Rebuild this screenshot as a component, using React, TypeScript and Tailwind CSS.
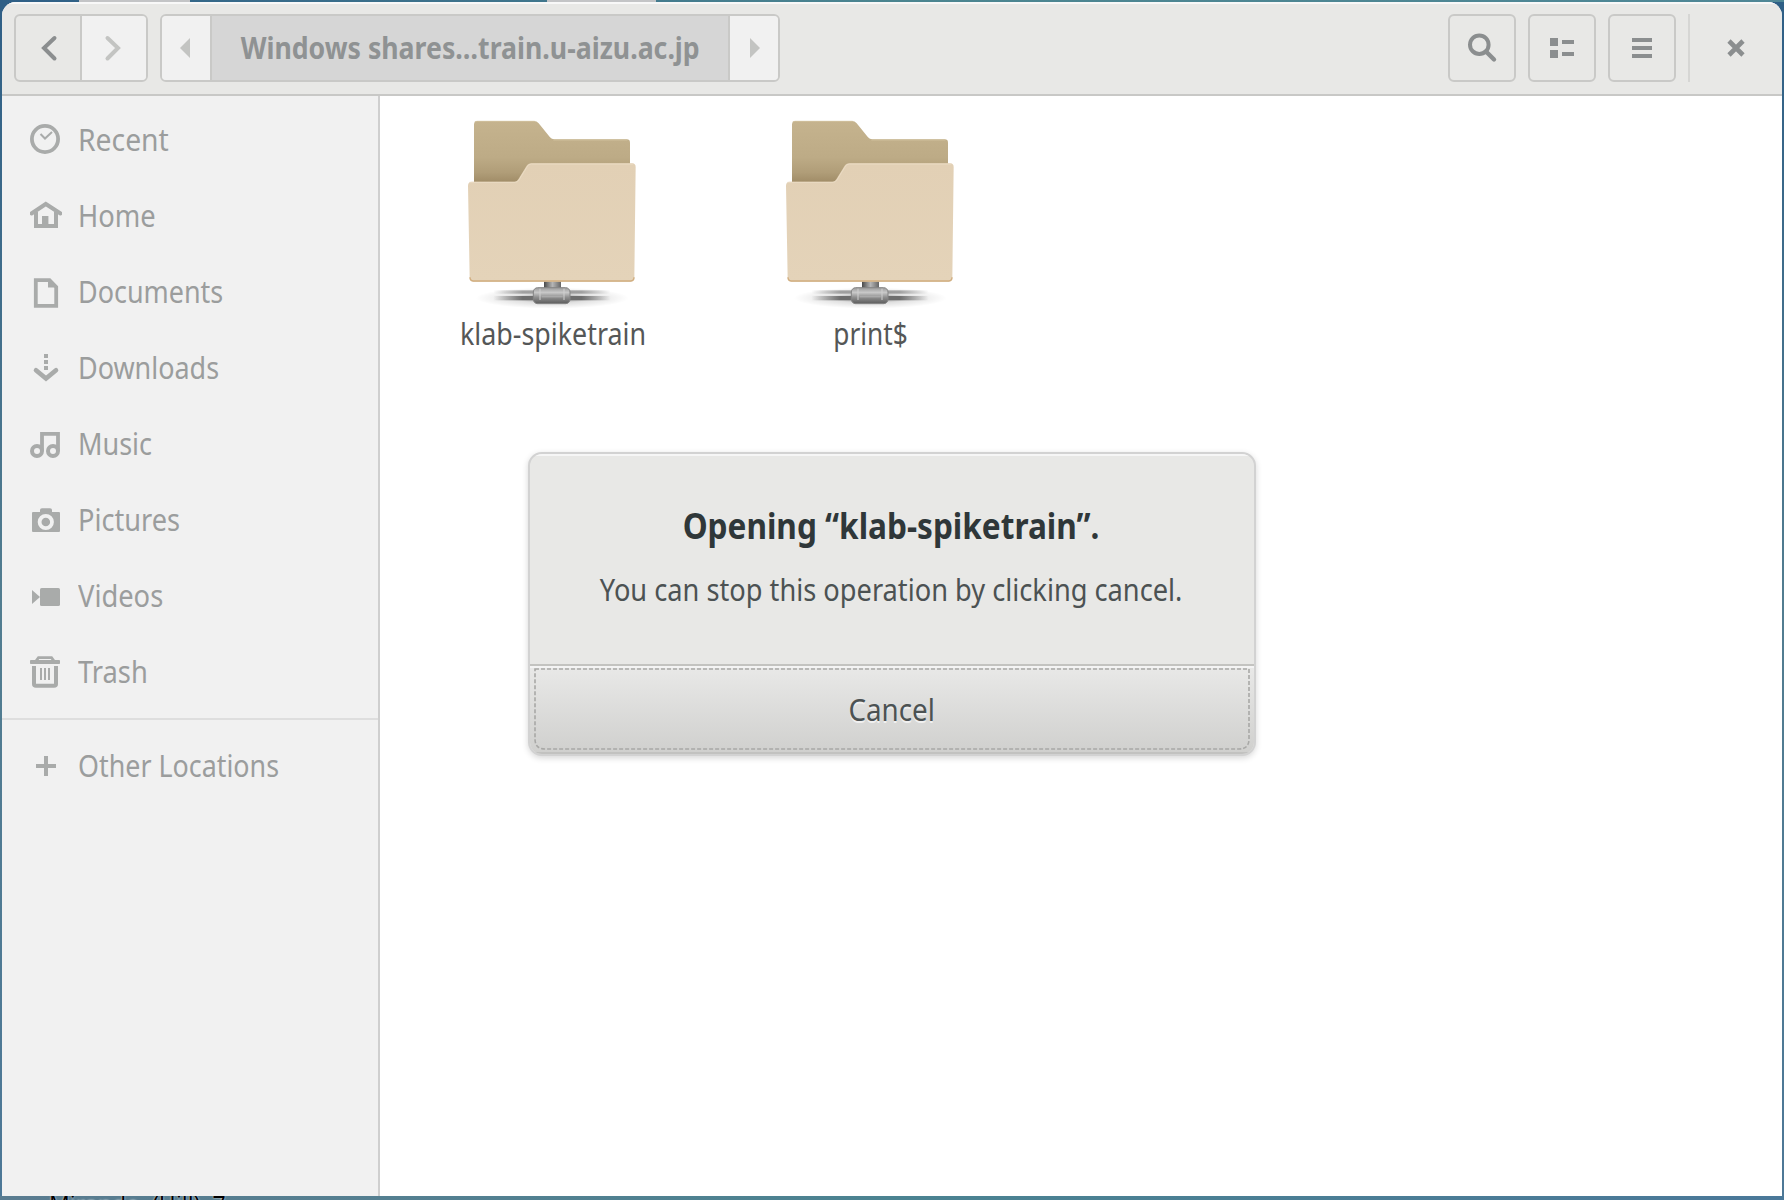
import React from "react";

const ICON = "#a9abaa";

function RecentIcon() {
  return (
    <g fill="none" stroke={ICON}>
      <circle cx="15" cy="15" r="13.1" strokeWidth="3.8" />
      <path d="M10.5 10 L15 14.5 L22 8" strokeWidth="2" />
    </g>
  );
}

function HomeIcon() {
  return (
    <g>
      <path d="M1.5 13.5 L15.8 4 L30.5 13.5" fill="none" stroke={ICON} strokeWidth="4" strokeLinecap="round" />
      <path d="M6 12 V26 H26 V12" fill="none" stroke={ICON} strokeWidth="4" />
      <rect x="12" y="16" width="6.4" height="10" fill={ICON} />
    </g>
  );
}

function DocumentsIcon() {
  return (
    <g>
      <path d="M5.8 4.2 H19.5 L26.2 11 V29.8 H5.8 Z" fill="none" stroke={ICON} strokeWidth="3.8" />
      <path d="M18 4 V11.6 H26 Z" fill={ICON} />
    </g>
  );
}

function DownloadsIcon() {
  return (
    <g>
      <path d="M14 2h4v4h-4zM14 8h4v4h-4zM14 14h4v4h-4z" fill={ICON} />
      <path d="M6 18.2 L16 26.6 L26 18.2" fill="none" stroke={ICON} strokeWidth="4.6" strokeLinecap="round" />
    </g>
  );
}

function MusicIcon() {
  return (
    <g fill="none" stroke={ICON}>
      <circle cx="7" cy="23" r="5" strokeWidth="4" />
      <circle cx="23" cy="23" r="5" strokeWidth="4" />
      <path d="M12 23 V5.8 H28 V23" strokeWidth="3.8" />
    </g>
  );
}

function PicturesIcon() {
  return (
    <g>
      <path
        d="M10 8 V6 Q10 4.2 12 4.2 H20 Q22 4.2 22 6 V8 H29 Q30 8 30 9 V27 Q30 28 29 28 H3 Q2 28 2 27 V9 Q2 8 3 8 Z"
        fill={ICON}
      />
      <circle cx="15.8" cy="18" r="6.2" fill="none" stroke="#f1f1f1" strokeWidth="3.8" />
    </g>
  );
}

function VideosIcon() {
  return (
    <g fill={ICON}>
      <rect x="10" y="8" width="20" height="18" rx="1.6" />
      <path d="M2 10 L10 17 L2 24 Z" />
    </g>
  );
}

function TrashIcon() {
  return (
    <g>
      <rect x="0" y="4" width="30" height="4" rx="0.8" fill={ICON} />
      <path d="M6 5 L8.5 1.6 H21.5 L24 5" fill="none" stroke={ICON} strokeWidth="2.8" />
      <path d="M4 10 V28 Q4 29.8 6 29.8 H24 Q26 29.8 26 28 V10" fill="none" stroke={ICON} strokeWidth="4" />
      <path d="M11 12 V24 M15 12 V24 M19 12 V24" stroke={ICON} strokeWidth="2" />
    </g>
  );
}

function PlusIcon() {
  return <path d="M16 6 V26 M6 16 H26" stroke={ICON} strokeWidth="4" />;
}

const places = [
  { label: "Recent", icon: RecentIcon, fit: "scale-x-[0.943]" },
  { label: "Home", icon: HomeIcon, fit: "scale-x-[0.91]" },
  { label: "Documents", icon: DocumentsIcon, fit: "scale-x-[0.898]" },
  { label: "Downloads", icon: DownloadsIcon, fit: "scale-x-[0.898]" },
  { label: "Music", icon: MusicIcon, fit: "scale-x-[0.9]" },
  { label: "Pictures", icon: PicturesIcon, fit: "scale-x-[0.905]" },
  { label: "Videos", icon: VideosIcon, fit: "scale-x-[0.91]" },
  { label: "Trash", icon: TrashIcon, fit: "scale-x-[0.91]" },
];

function Place({ label, icon: Icon, fit }: { label: string; icon: () => React.ReactElement; fit: string }) {
  return (
    <li className="flex h-[76px] items-center pl-7">
      <svg width="32" height="32" viewBox="0 0 32 32" className="shrink-0">
        <Icon />
      </svg>
      <span className={`mb-[1px] ml-4 origin-left whitespace-nowrap ${fit}`}>{label}</span>
    </li>
  );
}

function ShareFolder({ id, label, fit }: { id: string; label: string; fit: string }) {
  return (
    <div className="flex w-[318px] flex-col items-center">
      <svg width="240" height="210" viewBox="-21 0 720 630">
        <defs>
          <linearGradient id={`${id}-back`} gradientUnits="userSpaceOnUse" x1="0" y1="63" x2="0" y2="245">
            <stop offset="0" stopColor="#c5b38e" />
            <stop offset="0.6" stopColor="#bdab86" />
            <stop offset="0.85" stopColor="#b09d78" />
            <stop offset="1" stopColor="#a18d68" />
          </linearGradient>
          <linearGradient id={`${id}-front`} x1="0" y1="0" x2="0" y2="1">
            <stop offset="0" stopColor="#e2d0b5" />
            <stop offset="1" stopColor="#e4d3b9" />
          </linearGradient>
          <linearGradient id={`${id}-cable`} x1="0" y1="0" x2="1" y2="0">
            <stop offset="0" stopColor="#6e6e6e" stopOpacity="0" />
            <stop offset="0.25" stopColor="#6e6e6e" />
            <stop offset="0.75" stopColor="#6e6e6e" />
            <stop offset="1" stopColor="#6e6e6e" stopOpacity="0" />
          </linearGradient>
          <linearGradient id={`${id}-plug`} x1="0" y1="0" x2="0" y2="1">
            <stop offset="0" stopColor="#9a9a9a" />
            <stop offset="0.3" stopColor="#c8c8c8" />
            <stop offset="0.6" stopColor="#8f8f8f" />
            <stop offset="1" stopColor="#5c5c5c" />
          </linearGradient>
          <linearGradient id={`${id}-stem`} x1="0" y1="0" x2="1" y2="0">
            <stop offset="0" stopColor="#4a4a4a" />
            <stop offset="0.5" stopColor="#b5b5b5" />
            <stop offset="1" stopColor="#666" />
          </linearGradient>
          <radialGradient id={`${id}-shade`}>
            <stop offset="0" stopColor="#000" stopOpacity="0.45" />
            <stop offset="0.5" stopColor="#000" stopOpacity="0.12" />
            <stop offset="1" stopColor="#000" stopOpacity="0" />
          </radialGradient>
        </defs>
        <path
          d="M102 74 Q102 63 113 63 H282 Q290 63 296 70 L330 112 Q335 118 343 118 H560 Q570 118 570 128 V250 H102 Z"
          fill={`url(#${id}-back)`}
        />
        <path d="M104 66 Q106 64 113 64 H284 M340 120 H562" stroke="#d0c09c" strokeWidth="3" fill="none" />
        <ellipse cx="337" cy="594" rx="230" ry="32" fill={`url(#${id}-shade)`} />
        <rect x="160" y="571" width="352" height="10" fill={`url(#${id}-cable)`} opacity="0.6" />
        <rect x="160" y="588" width="352" height="13" fill={`url(#${id}-cable)`} />
        <rect x="312" y="540" width="51" height="28" fill={`url(#${id}-stem)`} />
        <rect x="280" y="563" width="110" height="48" rx="13" fill={`url(#${id}-plug)`} stroke="#858585" strokeWidth="3" />
        <path d="M300 566 V600 M372 566 V600" stroke="#d0d0d0" strokeWidth="3" />
        <path d="M305 590 H368" stroke="#aaa" strokeWidth="4" />
        <path
          d="M84 257 Q84 245 96 245 H224 Q231 245 235 238 L259 199 Q264 190 274 190 H576 Q587 190 587 201 L583 534 Q583 545 572 545 H100 Q89 545 89 534 Z"
          fill={`url(#${id}-front)`}
        />
        <path d="M89 247 H226 Q233 247 237 240 L261 201 Q265 192 274 192 H580" fill="none" stroke="#eadbc3" strokeWidth="3" />
        <path d="M90 532 Q90 543 100 543 H572 Q582 543 582 532" fill="none" stroke="#d1ae80" strokeWidth="4" />
      </svg>
      <span className={`mt-[2px] whitespace-nowrap leading-[44px] text-[#555757] ${fit}`}>{label}</span>
    </div>
  );
}

function HeaderButton({ children }: { children: React.ReactNode }) {
  return (
    <button className="flex size-[68px] items-center justify-center rounded-[6px] border-2 border-[#c9c9c7]">
      <svg width="64" height="64" viewBox="2 2 64 64">
        {children}
      </svg>
    </button>
  );
}

export default function App() {
  return (
    <div className="flex h-[1200px] w-[1784px] flex-col overflow-hidden bg-[#4b7590] font-['Noto_Sans',sans-serif] text-[30px] leading-none">
      <div className="flex h-[2px] shrink-0 bg-linear-to-r from-[#2f5f86] via-[#4b8590] to-[#4f8796]">
        <div className="ml-[79px] w-[111px] bg-[#c3c4c6]" />
        <div className="ml-[357px] w-[109px] bg-[#c3c4c6]" />
      </div>

      <div className="flex h-[1194px] bg-linear-to-b from-[#2f5f86] via-[#527d90] to-[#4d7897] px-[2px]">
        <div className="relative flex flex-1 flex-col overflow-hidden rounded-t-[14px] bg-white">
          <header className="flex h-[94px] shrink-0 items-start border-b-2 border-[#c8c8c6] bg-[#e8e8e6] pl-3 pt-3 shadow-[inset_0_2px_0_#f8f8f8]">
            <div className="flex h-[68px] w-[134px] overflow-hidden rounded-[6px] border-2 border-[#c9c9c7]">
              <button className="w-[66px] shrink-0 border-r-2 border-[#c9c9c7]">
                <svg width="64" height="64" viewBox="16 16 64 64">
                  <path d="M54.5 38 L44 48 L54.5 58.5" fill="none" stroke="#8b8e8f" strokeWidth="4" strokeLinecap="round" />
                </svg>
              </button>
              <button className="flex-1 bg-[#f1f1f1]">
                <svg width="64" height="64" viewBox="82 16 64 64">
                  <path d="M107.5 38 L118 48 L107.5 58.5" fill="none" stroke="#c3c4c2" strokeWidth="4" strokeLinecap="round" />
                </svg>
              </button>
            </div>

            <div className="ml-3 flex h-[68px] w-[620px] overflow-hidden rounded-[6px] border-2 border-[#c9c9c7]">
              <button className="w-[50px] shrink-0 border-r-2 border-[#c9c9c7] bg-[#f1f1f1]">
                <svg width="48" height="64" viewBox="162 16 48 64">
                  <path d="M190 38 V58 L180 48 Z" fill="#c3c4c2" />
                </svg>
              </button>
              <button className="flex min-w-0 flex-1 items-center justify-center bg-[#d6d6d6] text-[#8f9293]">
                <span className="scale-x-[0.889] whitespace-nowrap font-bold">Windows shares…train.u-aizu.ac.jp</span>
              </button>
              <button className="w-[50px] shrink-0 border-l-2 border-[#c9c9c7] bg-[#f1f1f1]">
                <svg width="48" height="64" viewBox="730 16 48 64">
                  <path d="M750 38 V58 L760 48 Z" fill="#c3c4c2" />
                </svg>
              </button>
            </div>

            <div className="ml-auto flex gap-3">
              <HeaderButton>
                <circle cx="31.3" cy="30.7" r="9.3" fill="none" stroke="#8b8e8f" strokeWidth="4" />
                <path d="M38 37.5 L46 45.5" stroke="#8b8e8f" strokeWidth="4.4" strokeLinecap="round" />
              </HeaderButton>
              <HeaderButton>
                <path d="M22 24h8v8h-8zM22 36h8v8h-8zM34 26h12v4h-12zM34 38h12v4h-12z" fill="#8b8e8f" />
              </HeaderButton>
              <HeaderButton>
                <path d="M24 24h20v4H24zM24 32h20v4H24zM24 40h20v4H24z" fill="#8b8e8f" />
              </HeaderButton>
            </div>
            <div className="ml-3 h-[68px] w-[2px] bg-[#d6d6d4]" />
            <button className="ml-3 mr-3 size-[68px]">
              <svg width="68" height="68" viewBox="0 0 68 68">
                <path d="M27 27 L41 41 M41 27 L27 41" stroke="#8b8e8f" strokeWidth="4.6" />
              </svg>
            </button>
          </header>

          <div className="flex flex-1">
            <aside className="w-[378px] border-r-2 border-[#cfcfcf] bg-[#f1f1f1] pt-[6px] text-[#9b9d9d]">
              <ul>
                {places.map((p) => (
                  <Place key={p.label} {...p} />
                ))}
              </ul>
              <div className="mt-[8px] h-[2px] bg-[#dedede]" />
              <ul className="mt-[8px]">
                <Place label="Other Locations" icon={PlusIcon} fit="scale-x-[0.895]" />
              </ul>
            </aside>
            <main className="flex flex-1 items-start pl-[14px] pt-[4px]">
              <ShareFolder id="share" label="klab-spiketrain" fit="scale-x-[0.895]" />
              <ShareFolder id="print" label="print$" fit="scale-x-[0.875]" />
            </main>
          </div>

          <div
            role="dialog"
            className="absolute left-[526px] top-[450px] flex h-[304px] w-[728px] flex-col overflow-hidden rounded-[14px] border-2 border-[#d2d2d2] bg-[#e8e8e6] text-[#4c5253] shadow-[0_2px_6px_rgba(0,0,0,0.16)]"
          >
            <div className="flex h-[212px] flex-col items-center border-b-2 border-[#c3c3c0] pr-[2px] shadow-[inset_0_2px_0_#f6f6f6]">
              <h1 className="mt-[50px] scale-x-[0.902] whitespace-nowrap text-[35px] font-bold leading-[44px] text-[#2f3739]">
                Opening “klab-spiketrain”.
              </h1>
              <p className="mt-5 scale-x-[0.907] whitespace-nowrap leading-[44px]">
                You can stop this operation by clicking cancel.
              </p>
            </div>
            <button className="relative flex flex-1 items-center justify-center border-b-2 border-[#c2c2c0] bg-linear-to-b from-[#e9e9e8] to-[#d0d0ce] pt-[2px] shadow-[inset_0_2px_0_#f4f4f4]">
              <svg width="724" height="86" viewBox="0 0 724 86" className="absolute left-0 top-0">
                <path
                  d="M5 3 H719 V73 Q719 83 709 83 H15 Q5 83 5 73 Z"
                  fill="none"
                  stroke="#a8a8a6"
                  strokeWidth="1.6"
                  strokeDasharray="4 2"
                />
              </svg>
              <span className="scale-x-[0.927] [text-shadow:0_2px_0_#f0f0f0]">Cancel</span>
            </button>
          </div>
        </div>
      </div>

      <div className="flex h-[4px] shrink-0 overflow-hidden bg-linear-to-r from-[#5a7c90] via-[#4b8391] to-[#4a7899] pl-[49px] text-[23px] leading-[22px] text-black [text-shadow:0_0_2px_white]">
        <span className="-mt-[3px] whitespace-pre">Mirando  (Hill)  7</span>
      </div>
    </div>
  );
}
